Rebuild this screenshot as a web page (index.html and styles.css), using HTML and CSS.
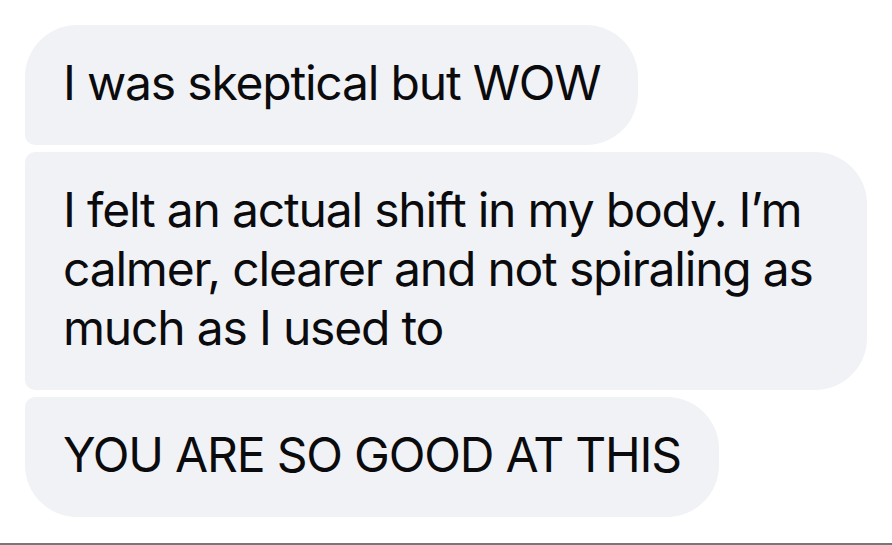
FILE: index.html
```html
<!DOCTYPE html>
<html lang="en">
<head>
<meta charset="utf-8">
<title>Messages</title>
<link rel="stylesheet" href="styles.css">
</head>
<body>
<main class="thread">
  <div class="bubble bubble-first">I was skeptical but WOW</div>
  <div class="bubble bubble-middle">I felt an actual shift in my body. I’m calmer, clearer and not spiraling as much as I used to</div>
  <div class="bubble bubble-last">YOU ARE SO GOOD AT THIS</div>
</main>
</body>
</html>
```

FILE: styles.css
```css
html, body {
  margin: 0;
  padding: 0;
  background: #ffffff;
}

body {
  width: 892px;
  height: 545px;
  overflow: hidden;
  box-sizing: border-box;
  border-bottom: 2px solid #777777;
  font-family: Inter, "Noto Sans", "Liberation Sans", sans-serif;
  color: #0b0b0e;
}

.thread {
  display: flex;
  flex-direction: column;
  align-items: flex-start;
  gap: 7px;
  padding: 25px 0 0 25px;
}

.bubble {
  box-sizing: border-box;
  max-width: 842px;
  padding: 28px 38px 33px 38px;
  background: #f1f2f5;
  font-size: 48px;
  line-height: 59px;
  letter-spacing: -1.2px;
}

.bubble-first {
  border-radius: 52px 52px 52px 10px;
}

.bubble-middle {
  width: 842px;
  border-radius: 10px 52px 52px 10px;
}

.bubble-last {
  border-radius: 10px 52px 52px 52px;
}
```
